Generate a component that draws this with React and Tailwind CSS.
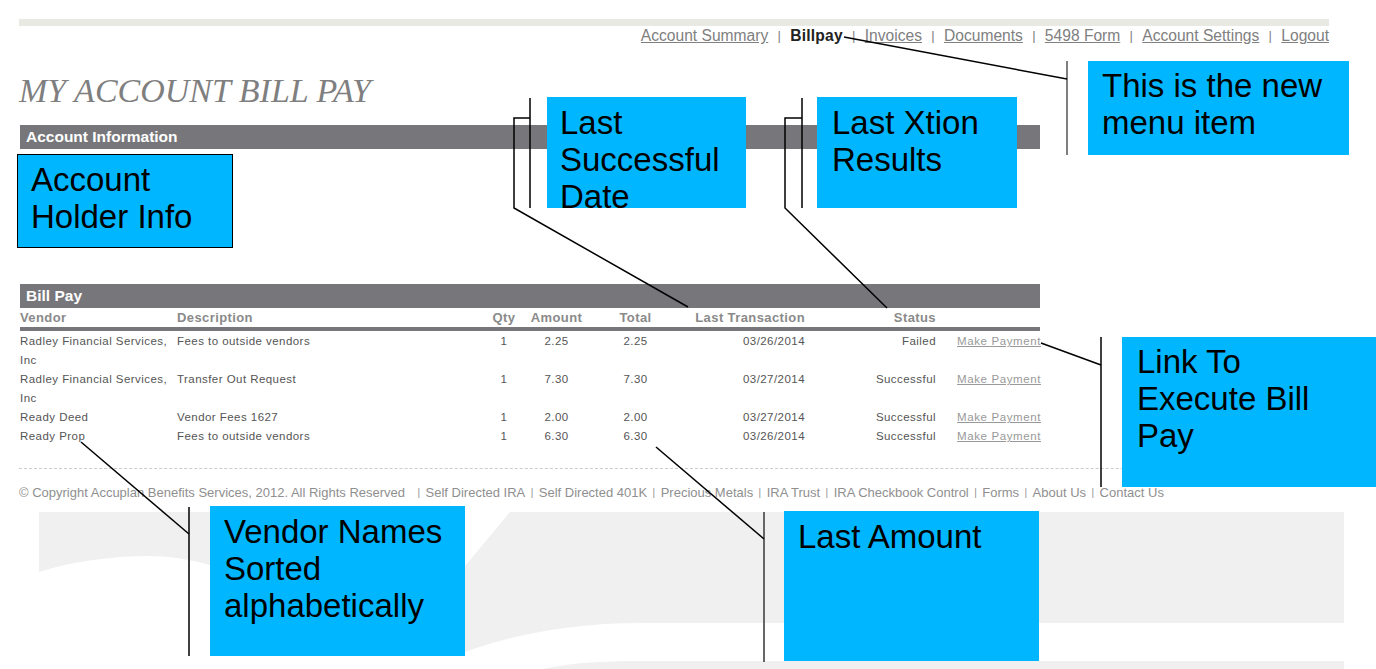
const navLinks = ['Account Summary', 'Billpay', 'Invoices', 'Documents', '5498 Form', 'Account Settings', 'Logout'];

const footerLinks = ['Self Directed IRA', 'Self Directed 401K', 'Precious Metals', 'IRA Trust', 'IRA Checkbook Control', 'Forms', 'About Us', 'Contact Us'];

const payments = [
  { vendor: 'Radley Financial Services, Inc', description: 'Fees to outside vendors', qty: 1, amount: '2.25', total: '2.25', date: '03/26/2014', status: 'Failed' },
  { vendor: 'Radley Financial Services, Inc', description: 'Transfer Out Request', qty: 1, amount: '7.30', total: '7.30', date: '03/27/2014', status: 'Successful' },
  { vendor: 'Ready Deed', description: 'Vendor Fees 1627', qty: 1, amount: '2.00', total: '2.00', date: '03/27/2014', status: 'Successful' },
  { vendor: 'Ready Prop', description: 'Fees to outside vendors', qty: 1, amount: '6.30', total: '6.30', date: '03/26/2014', status: 'Successful' },
];

const columns = 'grid grid-cols-[157px_313px_28px_77px_81px_129px_131px_105px]';

const Callout = ({ className, children }) => (
  <div className={`absolute bg-[#00b7ff] text-[33px] leading-[37px] text-black ${className}`}>
    {children}
  </div>
);

const App = () => {
  return (
    <div className="relative h-[669px] w-[1376px] overflow-hidden bg-white font-['Liberation_Sans',Arial,sans-serif]">
      {/* Watermark behind the page */}
      <svg className="absolute left-0 top-0" width="1376" height="669" viewBox="0 0 1376 669" fill="#f0f0f0">
        <path d="M39 512H420L300 600C260 580 200 556 150 556C110 556 70 562 39 572Z" />
        <path d="M510 512H1344V623H640C570 623 510 635 460 654V572Z" />
        <path d="M543 669C570 663 600 661 640 661H1344V669Z" />
      </svg>

      {/* Page */}
      <div className="relative ml-[19px] w-[1310px] pt-[19px]">
        <div className="h-[7px] bg-[#e9e9e4]" />
        <nav className="flex h-[20px] items-center justify-end text-[15.6px] text-[#808080]">
          {navLinks.map((link, i) => (
            <span key={link} className="flex items-center">
              {i > 0 && <span className="w-[22px] text-center text-[13px]">|</span>}
              {link === 'Billpay' ? <b className="tracking-[0.2px] text-[#222]">{link}</b> : <a className="underline">{link}</a>}
            </span>
          ))}
        </nav>

        <h1 className="mt-[27px] font-['Liberation_Serif',serif] text-[34px] leading-[36px] italic text-[#7f7f7f]">
          MY ACCOUNT BILL PAY
        </h1>

        <div className="w-[1021px]">
          <div className="ml-px mt-[16px] flex h-[24px] items-center bg-[#77777b] pl-[6px] text-[15.5px] font-bold text-white">
            Account Information
          </div>

          <div className="ml-px mt-[135px] flex h-[24px] items-center bg-[#77777b] pl-[6px] text-[15.5px] font-bold text-white">
            Bill Pay
          </div>

          <div className={`${columns} h-[19px] items-center pl-px text-[13px] font-bold tracking-[0.4px] text-[#8a8a8a]`}>
            <span>Vendor</span>
            <span>Description</span>
            <span className="text-center">Qty</span>
            <span className="text-center">Amount</span>
            <span className="text-center">Total</span>
            <span className="text-right">Last Transaction</span>
            <span className="text-right">Status</span>
            <span />
          </div>
          <div className="ml-px h-[4px] bg-[#77777b]" />

          <div className="pl-px pt-[1px] text-[11.5px] leading-[19px] tracking-[0.45px] text-[#555]">
            {payments.map((p) => (
              <div key={p.vendor + p.description} className={columns}>
                <span>{p.vendor}</span>
                <span>{p.description}</span>
                <span className="text-center">{p.qty}</span>
                <span className="text-center">{p.amount}</span>
                <span className="text-center">{p.total}</span>
                <span className="text-right">{p.date}</span>
                <span className="text-right">{p.status}</span>
                <a className="text-right tracking-[0.6px] text-[#999] underline">Make Payment</a>
              </div>
            ))}
          </div>

          <div className="mt-[22px] w-[1310px] border-t border-dashed border-[#ccc]" />
        </div>

        <footer className="mt-[14px] flex items-center whitespace-nowrap text-[13px] text-[#8f8f8f]">
          <span className="pr-[7px]">© Copyright Accuplan Benefits Services, 2012. All Rights Reserved</span>
          {footerLinks.map((link) => (
            <span key={link} className="flex items-center">
              <span className="w-[13.5px] text-center text-[10px]">|</span>
              {link}
            </span>
          ))}
        </footer>
      </div>

      {/* Connector lines of the annotations */}
      <svg className="absolute left-0 top-0" width="1376" height="669" viewBox="0 0 1376 669" fill="none" stroke="#000" strokeWidth="1.5">
        <path d="M530 98V208M530 118H514V208L688 307" />
        <path d="M802 98V208M802 118H785V208L887 308" />
        <path d="M1067 61V155" stroke="#555" />
        <path d="M844 37L1067 79" />
        <path d="M1101 337V487" />
        <path d="M1041 343L1101 365" />
        <path d="M189 507V656" />
        <path d="M81 442L189 534" />
        <path d="M764 512V662" stroke="#666" strokeWidth="2" />
        <path d="M656 447L764 539" />
      </svg>

      {/* Annotation boxes */}
      <Callout className="left-[17px] top-[154px] h-[94px] w-[216px] border border-black pl-[13px] pt-[6px]">
        Account<br />Holder Info
      </Callout>
      <Callout className="left-[547px] top-[97px] h-[111px] w-[199px] pl-[13px] pt-[7px]">
        Last Successful Date
      </Callout>
      <Callout className="left-[817px] top-[97px] h-[111px] w-[200px] pl-[15px] pt-[7px]">
        Last Xtion Results
      </Callout>
      <Callout className="left-[1088px] top-[61px] h-[94px] w-[261px] pl-[14px] pt-[6px]">
        This is the new menu item
      </Callout>
      <Callout className="left-[1122px] top-[337px] h-[150px] w-[254px] pl-[15px] pr-[40px] pt-[6px]">
        Link To Execute Bill Pay
      </Callout>
      <Callout className="left-[210px] top-[506px] h-[150px] w-[255px] pl-[14px] pt-[7px]">
        Vendor Names Sorted alphabetically
      </Callout>
      <Callout className="left-[784px] top-[511px] h-[150px] w-[255px] pl-[14px] pt-[7px]">
        Last Amount
      </Callout>
    </div>
  );
};

export default App;
